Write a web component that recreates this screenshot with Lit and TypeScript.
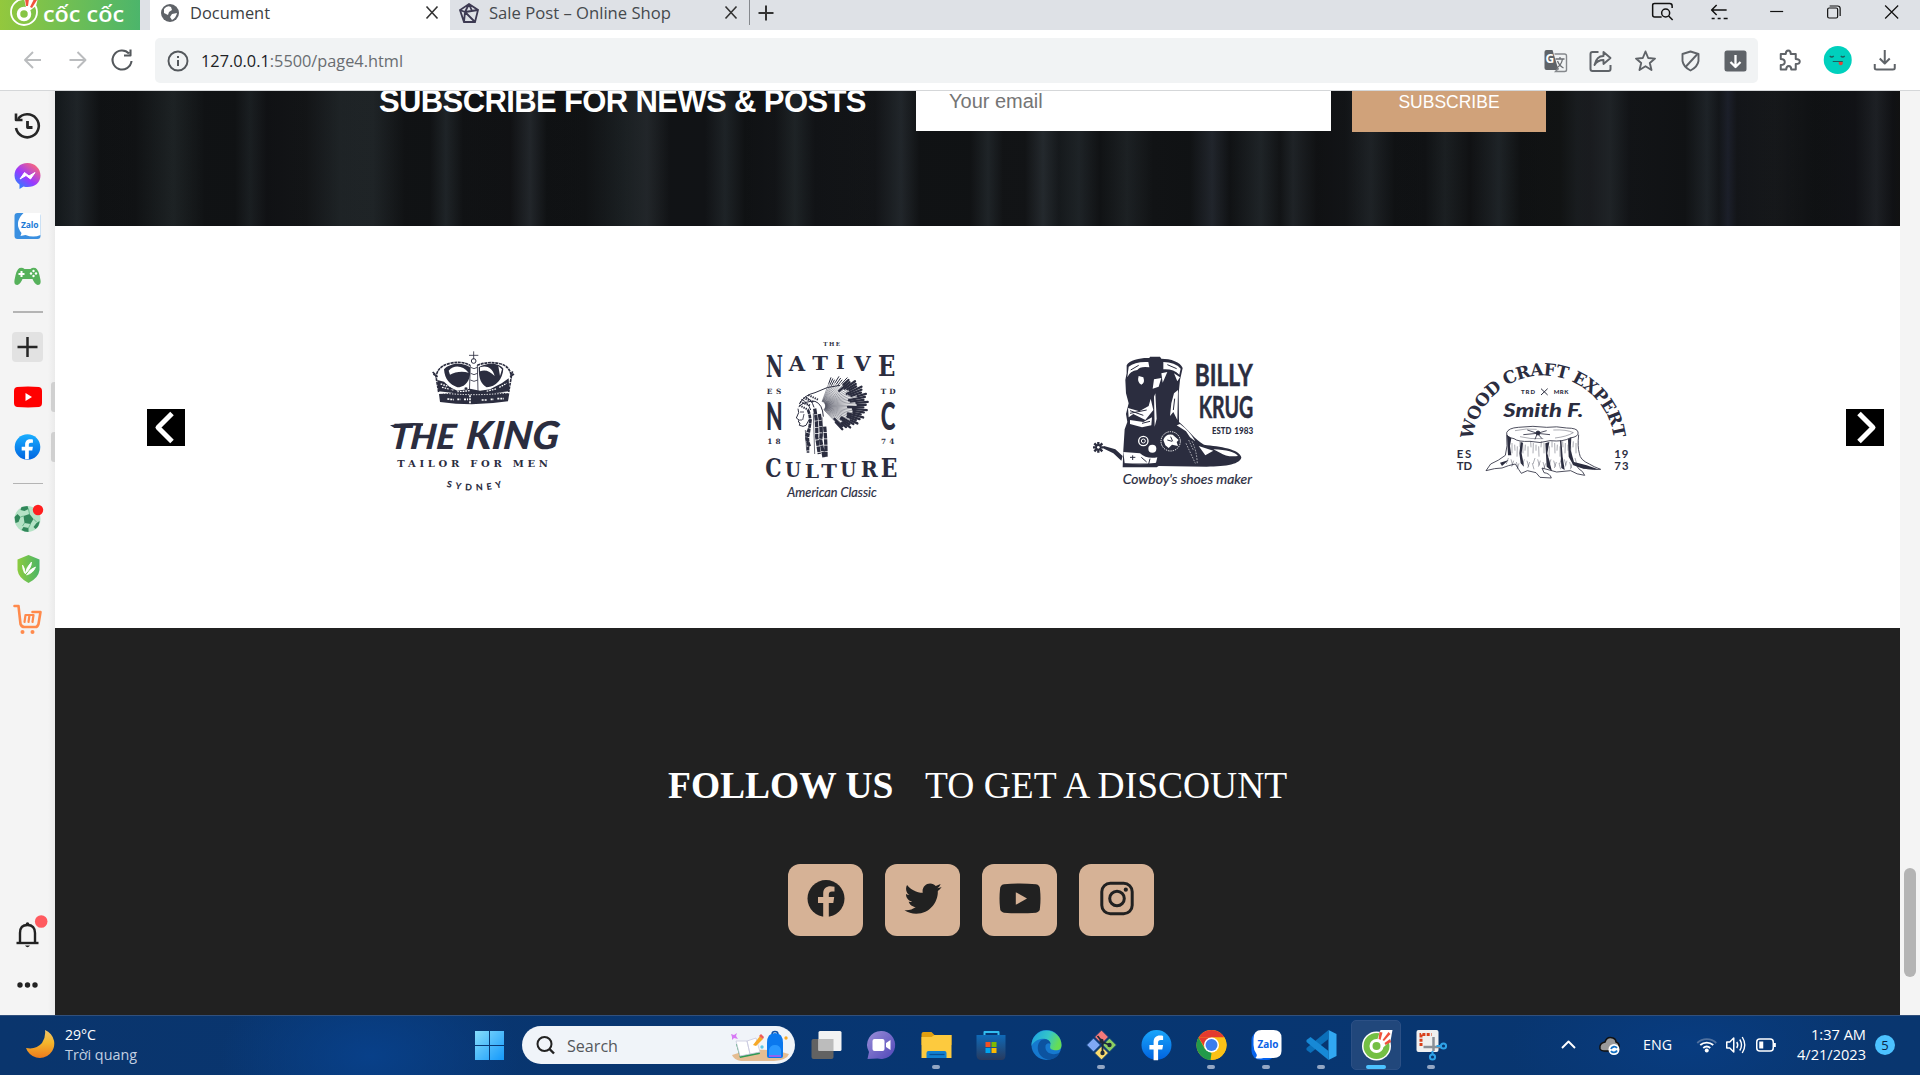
import { LitElement, html, svg, css } from "lit";
import { customElement } from "lit/decorators.js";

const UI = "'Open Sans','Noto Sans',sans-serif";
const INK = "#2b2d3f";

/** Single-line label squeezed to an exact width. */
const fit = (text: unknown, width: number, size: number, color: string, h = 26) => html`
  <svg class="fit" width=${width + 4} height=${h} viewBox="0 0 ${width + 4} ${h}">
    <text x="0" y=${h / 2 + size * 0.36} font-size=${size} fill=${color} textLength=${width} lengthAdjust="spacingAndGlyphs" font-family=${UI}>${text}</text>
  </svg>`;

/** Icon whose origin is the centre of its slot. */
const slot = (w: number, h: number, body: unknown) => html`
  <svg class="slot" width=${w} height=${h} viewBox="${-w / 2} ${-h / 2} ${w} ${h}">${body}</svg>`;

const line = (d: string, c = "#5f6368", w = 2, extra = "none") =>
  svg`<path d=${d} stroke=${c} stroke-width=${w} fill=${extra} stroke-linejoin="round"/>`;

const FB_F = "M1.6 15V4.4h4.2l.8-4.6H1.6v-2.4c0-1.6.7-2.6 2.7-2.6h2.3v-4C6-9.4 4.6-9.6 3.4-9.6c-3.900 0-6.300 2.300-6.300 6.500v2.900h-4.200v4.600h4.200V15z";
const YT_SM = "M-11-10Q0-10.800 11-10Q14-9.600 14-6V6Q14 9.600 11 10Q0 10.800-11 10Q-14 9.600-14 6V-6Q-14-9.600-11-10Z";

const coccoc = (ring: string, body: string) => svg`
  <circle r="14.500" cy="1" fill=${ring}/>
  <circle r="13" cy="1" fill=${body}/>
  <path d="M0-3L4-15H16L14-4L6 3Z" fill=${ring}/>
  <path d="M2-6L3-13L6-12.500L4-5ZM6-5L12-13L14-11L7.500-4ZM8-2L13.500-6L14.500-3L9 0Z" fill="#f0523d"/>
  <circle r="7" cy="1" fill=${ring}/><circle r="4" cy="1" fill=${body}/>`;

const sideTop = [
  svg`${line("M-9.500-7A11.500 11.500 0 1 1-11.500 2", "#262626", 2.600)}${line("M-11.500-12.500V-6H-5", "#262626", 2.600)}${line("M0-5V1.500H5", "#262626", 2.800)}`,
  svg`<defs><linearGradient id="ms" x1="0" y1="1" x2=".8" y2="0"><stop offset="0" stop-color="#0a95ff"/><stop offset=".5" stop-color="#9a38ff"/><stop offset="1" stop-color="#ff6a74"/></linearGradient></defs>
    <path d="M0-13C7.500-13 13-7.500 13-.5S7.500 11 0 11Q-2 11-4 10.500L-8 13V8.500C-11 6.500-13 3.500-13-.5C-13-7.500-7.500-13 0-13Z" fill="url(#ms)"/>
    <path d="M-7.500 3L-3-3.500L1.500 0L7.500-3.500L3 3L-1.500-.5Z" fill="#fff" stroke="#fff" stroke-linejoin="round"/>`,
  svg`<rect x="-13" y="-13" width="26" height="26" rx="3" fill="#3a8fe0"/><path d="M-4-13H13V9Q6 12-2 9L-7 10L-6 7Q-14-3-4-13Z" fill="#fff"/>
    <text x="-6.500" y="2" font-size="8.500" font-weight="700" fill="#1b7ad6" textLength="17.500" font-family=${UI}>Zalo</text>`,
  svg`<path d="M-8-8Q-5-9-3-7H3Q5-9 8-8Q11-7 13 4Q14 9 10 9Q7 8 5 3H-5Q-7 8-10 9Q-14 9-13 4Q-11-7-8-8Z" fill="#56b15b"/>
    <path d="M-6-5V1M-9-2H-3" stroke="#fff" stroke-width="2"/><g fill="#fff"><circle cx="6" cy="-5" r="1.200"/><circle cx="6" cy="0" r="1.200"/><circle cx="3.500" cy="-2.500" r="1.200"/><circle cx="8.500" cy="-2.500" r="1.200"/></g>`,
];
const sideMid = [
  svg`<rect x="-15.500" y="-15" width="31" height="30" rx="4" fill="#e2e2e2"/>${line("M0-10V10M-10 0H10", "#262626", 2.500)}`,
  svg`<path d=${YT_SM} transform="translate(.5,0)" fill="#f00"/><path d="M-2-4L4.500 0L-2 4Z" fill="#fff"/><path d="M27.500-15h-1q-3 0-3 3V12q0 3 3 3h1Z" fill="#d0d0d0"/>`,
  svg`<defs><linearGradient id="fbg" x1="0" y1="0" x2="0" y2="1"><stop offset="0" stop-color="#19aeff"/><stop offset="1" stop-color="#0064e0"/></linearGradient></defs>
    <circle r="12.800" fill="url(#fbg)"/><path d=${FB_F} transform="scale(.82)" fill="#fff"/><path d="M27.500-15h-1q-3 0-3 3V12q0 3 3 3h1Z" fill="#d0d0d0"/>`,
];
const sideLow = [
  svg`<circle r="13" fill="#b4e2c5"/><path d="M-4-3L2-5L6 0L3 5L-3 4ZM-13-2L-10-5L-7-2L-9 3L-12 4ZM-4 8L1 9L1 13Q-3 13-6 11ZM9 4L12 2Q12 7 8 10L6 8ZM-6-12L0-13L1-10L-3-8L-7-9Z" fill="#31875a"/>
    <path d="M2-5L1-10M6 0L9 3M3 5L1 9M-4-3L-7-2M-3 4L-5 7" stroke="#6ab98b" stroke-width="1"/><circle cx="10.500" cy="-9" r="5.200" fill="#ff1f1f"/>`,
  svg`<defs><linearGradient id="sh" x1="0" y1="0" x2="1" y2="0"><stop offset="0" stop-color="#8ccb3e"/><stop offset="1" stop-color="#4bb567"/></linearGradient></defs>
    <path d="M1-14L12-9.500V1Q11 9 1 14Q-9 9-10 1V-9.500Z" fill="url(#sh)"/><path d="M-5-4Q-5 0-3 4Q-2 0-5-4ZM-2.500 5Q-1-2 4-7Q4-1-2.500 5ZM-1 6Q2 0 8-2Q6 4-1 6Z" fill="#fff" stroke="#fff" stroke-width=".8"/>`,
  svg`<g fill="none" stroke="#ff8a4c" stroke-width="2.600" stroke-linecap="round" stroke-linejoin="round"><path d="M-13-13H-9L-7 5Q-6 8-3 8H8Q10 8 11 5L13-7H5"/><path d="M-3 3L-2-4H2L1 3L2-4H6L5 3" stroke-width="2.200"/></g><circle cx="-5" cy="13" r="2" fill="#ff8a4c"/><circle cx="5" cy="13" r="2" fill="#ff8a4c"/>`,
];
const bell = svg`<g transform="translate(0,1)">${line("M-7.500 7V-3Q-7.500-11 0-11T7.500-3V7", "#222", 2.400)}${line("M-11 7H11", "#222", 2.400)}<circle cy="-12" r="1.800" fill="#222"/><path d="M-2.500 9.500H2.500Q0 13-2.500 9.500Z" fill="#222"/></g><circle cx="13.700" cy="-13.500" r="6.300" fill="#ff5a5f"/>`;

const boxIcons = [
  svg`<path d="M-9-11H-3L3 9H-9Q-11 9-11 7V-9Q-11-11-9-11Z" fill="#5f6368"/><path d="M-1-7H9Q11-7 11-5V9Q11 10.500 9 10.500H0L3 7" fill="none" stroke="#85888c" stroke-width="1.400"/>
    <text x="-10" y="2" font-size="12" font-weight="700" fill="#fff" font-family=${UI}>G</text>${line("M0-2H9M4.500-4V-2M7-2Q6 4 1 7M2 0Q4 5 8 7", "#6b6e72", 1.300)}`,
  svg`${line("M-2-9H-8Q-10-9-10-7V8Q-10 10-8 10H8Q10 10 10 8V4", "#5f6368", 2)}${line("M-6 4Q-4-5 3-5V-9L10-3L3 3V-1Q-3-1-6 4Z", "#5f6368", 1.900)}`,
  svg`${line("M0-9.500L2.700-3L9.500-2.400L4.300 2L6 9L0 5.300L-6 9L-4.300 2L-9.500-2.400L-2.700-3Z", "#5f6368", 1.900)}`,
  svg`${line("M0-9.500L8-7V0Q7 6 0 9.500Q-7 6-8 0V-7Z", "#5f6368", 1.900)}${line("M-5 6L7-7", "#5f6368", 1.900)}`,
  svg`<rect x="-11" y="-10.500" width="22" height="21" rx="2.500" fill="#5f6368"/>${line("M0-6V6M-5 1L0 6L5 1", "#fff", 2.300)}`,
];
const barIcons = [
  svg`${line("M-8-6H-4Q-4-9.500-1.500-9.500T1-6H6V-1Q10-1 10 1.500T6 4V9.500H1.500Q1.500 6-1 6T-3.500 9.500H-9V5Q-5 5-5 2T-9-1V-6Z", "#5f6368", 2)}`,
  svg`<circle r="14" fill="#00d0bd"/>${line("M-8-4Q-6-2-4-4M3-4Q5-2 7-4M-5 1.500H5", "#1c5f5c", 1.200)}<path d="M1 2H5V4Q3 6.500 1 4Z" fill="#e0453c"/>`,
  svg`${line("M0-10V3M-5-1.500L0 3.500L5-1.500M-10 4V8Q-10 9.500-8 9.500H8Q10 9.500 10 8V4", "#5f6368", 2)}`,
];
const winIcons = [
  svg`${line("M-1 5H-8Q-10 5-10 3V-7Q-10-8.500-8-8.500H7Q9.500-8.500 9.500-6V-4", "#111", 1.500)}<circle cx="3" cy="1" r="4" fill="none" stroke="#111" stroke-width="1.500"/>${line("M6 4L10 8", "#111", 1.500)}`,
  svg`${line("M7-2H-8M-3-7L-8-2L-3 3", "#111", 1.500)}${line("M-8 6.500H-5M-2 6.500H1M4 6.500H8", "#111", 1.500)}`,
  svg`${line("M-6.500-.5H6.500", "#111", 1.200)}`,
  svg`<rect x="-6" y="-4" width="10" height="10" rx="1.500" fill="none" stroke="#111" stroke-width="1.200"/>${line("M-4-6H4Q6.500-6 6.500-3.500V4", "#111", 1.200)}`,
  svg`${line("M-6.500-6.500L6.500 6.500M6.500-6.500L-6.500 6.500", "#111", 1.200)}`,
];

const apps: { on?: string; art: unknown }[] = [
  { art: svg`<rect x="-15" y="-6" width="22" height="20" rx="2" fill="#626262"/><rect x="-8" y="-14" width="23" height="20" rx="1.500" fill="#f3f3f3"/><rect x="-8" y="-6" width="15" height="12" fill="#bcbcbc"/>` },
  { art: svg`<defs><linearGradient id="ch" x1="0" y1="0" x2="1" y2="1"><stop offset="0" stop-color="#9a8fd8"/><stop offset="1" stop-color="#4f46b8"/></linearGradient></defs><path d="M0-14A14 14 0 1 1-4 13.500L-14 14L-12.500 7A14 14 0 0 1 0-14Z" fill="url(#ch)"/><rect x="-9" y="-6" width="12" height="12" rx="2" fill="#fff"/><path d="M4.500-2L9-5V5L4.500 2Z" fill="#fff"/>` },
  { on: "dot", art: svg`<path d="M-15-11Q-15-13-13-13H-5L-2-10H15V0H-15Z" fill="#e09f10"/><path d="M-15-8H-5L-2-10H15V13H-15Z" fill="#fdca3e"/><path d="M-10 13V8Q-10 6-8 6H8Q10 6 10 8V13Z" fill="#1280d0"/><path d="M-7 9.500H8" stroke="#0a4f94" stroke-width="1.300"/>` },
  { art: svg`<defs><linearGradient id="st" x1="0" y1="0" x2="0" y2="1"><stop offset="0" stop-color="#0f6ab8"/><stop offset="1" stop-color="#283a5e"/></linearGradient></defs>${line("M-7-9V-13H7V-9", "#31bdf0", 2)}<path d="M-15-10H14V10Q14 15 10 15H-10Q-15 15-15 10Z" fill="url(#st)"/><path d="M-6-3H-1V2H-6Z" fill="#f25022"/><path d="M0-3H5V2H0Z" fill="#7fba00"/><path d="M-6 3H-1V8H-6Z" fill="#00a4ef"/><path d="M0 3H5V8H0Z" fill="#ffb900"/>` },
  { art: svg`<defs><linearGradient id="ed" x1="0" y1="0" x2="1" y2=".3"><stop offset="0" stop-color="#1aa0e4"/><stop offset=".6" stop-color="#35c6c8"/><stop offset="1" stop-color="#66dd55"/></linearGradient></defs><circle r="15" fill="#1679cf"/><path d="M-15 1A15 15 0 0 1 15 0C15 5 11 6 7 5C2 4 4 1 4-1C3-6-2-7-6-6C-10-5-14-2-15 1Z" fill="url(#ed)"/><path d="M-5-5C-12 0-9 14 3 14.700C8 14 11 12 13 8C6 11-2 8-1 1C-1-1 2-3 4-1C4-5-1-7-5-5Z" fill="#0c53a0"/>` },
  { on: "dot", art: svg`<g stroke="#0a3a75" stroke-width="1"><path d="M0-15L7-8L0-1L-7-8Z" fill="#f5797a"/><path d="M-8-7L-1 0L-8 7L-15 0Z" fill="#80a9f5"/><path d="M8-7L15 0L8 7L1 0Z" fill="#8ccf62"/><path d="M0 1L7 8L0 15L-7 8Z" fill="#fbdc6e"/></g>${line("M-4-9L1-3V8M1-3L8 0", "#1e2a3a", 1.800)}<circle cx="1" cy="8" r="2.200" fill="#1e2a3a"/><circle cx="8" r="2.200" fill="#1e2a3a"/><circle cx="0" cy="-4" r="2.200" fill="#1e2a3a"/>` },
  { art: svg`<circle r="15" fill="url(#fbg2)"/><defs><linearGradient id="fbg2" x1="0" y1="0" x2="0" y2="1"><stop offset="0" stop-color="#19a6fb"/><stop offset="1" stop-color="#0062df"/></linearGradient></defs><path d=${FB_F} fill="#fff" transform="translate(0,.2)"/>` },
  { on: "dot", art: svg`<circle r="15" fill="#fbc116"/><path d="M-13-7.500A15 15 0 0 1 13-7.500H0Z" fill="#e33b2e"/><path d="M0-7.500H13A15 15 0 0 1 0 15L6.500 4Z" fill="#fbc116"/><path d="M-13-7.500L-6.500 4L0 8L-1 15A15 15 0 0 1-13-7.500Z" fill="#229a4a"/><path d="M-13-7.500L-6 3.500L0-7.500Z" fill="#e33b2e"/><circle r="7.500" fill="#fff"/><circle r="6" fill="#3b7ded"/>` },
  { on: "dot", art: svg`<rect x="-15" y="-14" width="24" height="29" rx="9" fill="#0563f0"/><path d="M-5-15H7Q15-15 15-7V6Q15 13 7 13H-3Q-8 14-11 13Q-9 11-10 9Q-13 5-13 0V-6Q-13-15-5-15Z" fill="#fff"/><text x="-9" y="3" font-size="10.500" font-weight="700" fill="#0b62e6" textLength="21" lengthAdjust="spacingAndGlyphs" font-family=${UI}>Zalo</text>` },
  { on: "dot", art: svg`<path d="M7-15L15-11V11L7 15Z" fill="#31a8f2"/><path d="M7-15V-6L-11 8L-15 5V3Z" fill="#0b6fb9"/><path d="M7 15V6L-11-8L-15-5V-3Z" fill="#1789d6"/>` },
  { on: "active", art: svg`${coccoc("#fff", "#74bf44")}` },
  { on: "dot", art: svg`<rect x="-15" y="-15" width="22" height="22" rx="2" fill="#f0f0f0"/><path d="M-10.500 1V-10.500H0" fill="none" stroke="#d8401c" stroke-width="3" stroke-dasharray="3 1.300"/>${line("M2-8V6M-8 2H10", "#8a8f96", 2.500)}<circle cx="12" cy="1" r="2.600" fill="none" stroke="#2ea3e8" stroke-width="2"/><circle cx="1" cy="12" r="2.600" fill="none" stroke="#2ea3e8" stroke-width="2"/>${line("M9 1H5M1 9V6", "#2ea3e8", 2)}` },
];

const socials = [
  svg`<circle r="18.500" fill="#212121"/><path d="M-2.800 19V4.500H-8V-1.500H-2.800V-5C-2.800-10 .3-12.200 4.500-12.200Q7-12.200 8.500-11.800V-7H6Q2.800-7 2.800-3.800V-1.500H8.200L7.300 4.500H2.800V19Z" fill="#d6b296"/>`,
  svg`<path transform="translate(-18.500,-18.500) scale(.0725)" fill="#212121" d="M459.370 151.716c.325 4.548.325 9.097.325 13.645 0 138.720-105.583 298.558-298.558 298.558-59.452 0-114.680-17.219-161.137-47.106 8.447.974 16.568 1.299 25.340 1.299 49.055 0 94.213-16.568 130.274-44.832-46.132-.975-84.792-31.188-98.112-72.772 6.498.974 12.995 1.624 19.818 1.624 9.421 0 18.843-1.300 27.614-3.573-48.081-9.747-84.143-51.980-84.143-102.985v-1.299c13.969 7.797 30.214 12.670 47.431 13.319-28.264-18.843-46.781-51.005-46.781-87.391 0-19.492 5.197-37.360 14.294-52.954 51.655 63.675 129.300 105.258 216.365 109.807-1.624-7.797-2.599-15.918-2.599-24.040 0-57.828 46.782-104.934 104.934-104.934 30.213 0 57.502 12.670 76.670 33.137 23.715-4.548 46.456-13.320 66.599-25.340-7.798 24.366-24.366 44.833-46.132 57.827 21.117-2.273 41.584-8.122 60.426-16.243-14.292 20.791-32.161 39.308-52.628 54.253z"/>`,
  svg`<path d="M-16-14.200Q0-16 16-14.200Q20-13.500 20-9Q21 0 20 9Q20 13.500 16 14.200Q0 15.500-16 14.200Q-20 13.500-20 9Q-21 0-20-9Q-20-13.500-16-14.200Z" fill="#212121"/><path d="M-4.200-6.300L7 0L-4.200 6.300Z" fill="#d6b296"/>`,
  svg`<g fill="none" stroke="#212121" stroke-width="3"><rect x="-15.200" y="-15.200" width="30.400" height="30.400" rx="8.500"/><circle r="7.300"/></g><circle cx="8.800" cy="-8.800" r="2.100" fill="#212121"/>`,
];

/** Poster lettering: each entry is glyph, left edge, baseline, size and drawn width. */
const word = (glyphs: [string, number, number, number, number][]) =>
  glyphs.map(([c, x, y, s, w]) => svg`<tspan x=${x} y=${y} font-size=${s} textLength=${w} lengthAdjust="spacingAndGlyphs">${c}</tspan>`);

/** Eagle-feather fan: thin quills that end in heavy dark tips. */
const feathers = () => {
  const out = [];
  for (let i = 0; i < 34; i++) {
    const t = i / 33;
    const a = (-72 + t * 122) * Math.PI / 180;
    const r = 74 + 68 * Math.sin(Math.PI * Math.min(1, t * 0.75 + 0.12)) - (i % 3) * 6;
    const cx = 242, cy = 228;
    const ex = cx + Math.cos(a) * r, ey = cy + Math.sin(a) * r * 0.9;
    const k = t < 0.2 ? 0.8 : 0.64 + (i % 4) * 0.06;
    const mx = cx + Math.cos(a) * r * k, my = cy + Math.sin(a) * r * 0.9 * k;
    out.push(svg`<path d="M${cx + Math.cos(a) * 14} ${cy + Math.sin(a) * 14}L${mx} ${my}" stroke-width="1.400"/>
      <path d="M${mx} ${my}L${ex} ${ey}" stroke-width=${t < 0.2 ? 3 : 7} stroke-linecap="round"/>`);
  }
  return out;
};

const king = svg`
  <g fill="none" stroke=${INK} stroke-width="3">
    <path d="M311 64V88M297 76H325" stroke-width="2.500"/><circle cx="311" cy="93" r="7"/>
    <path d="M301 105L298 190M322 105L324 185M302 112Q312 120 322 112M302 130Q312 138 322 130M301 150Q312 158 323 150" stroke-width="2.500"/>
    <path d="M206 186L198 140Q203 108 240 100T300 106M322 106Q350 94 385 100T424 140L416 186" stroke-width="5" stroke-dasharray="9 2"/>
    <path d="M190 132L203 140M188 126l8 8M432 132L420 140M428 124l-4 10" stroke-width="5"/>
  </g>
  <path d="M222 118C240 98 280 96 300 112L300 135C296 160 280 172 262 172C240 164 224 148 222 118ZM326 112C350 96 388 98 400 116C398 148 378 170 350 172C334 162 326 150 326 112Z" fill=${INK}/>
  <path d="M236 122C252 104 278 106 296 128C275 122 255 126 240 134ZM330 112C350 106 366 112 374 138C360 124 346 118 330 124ZM385 108L396 118L390 138Z" fill="#fff"/>
  <path d="M202 150L222 155L240 172L262 182L300 176L330 182L360 178L395 160L416 145L418 184Q312 200 205 184Z" fill=${INK}/>
  <path d="M212 162L232 168M216 172L250 180M262 186L300 182M350 184L380 176M388 172L410 160" stroke="#fff" stroke-width="4" stroke-dasharray="5 3"/>
  <path d="M207 192Q312 178 418 190L414 214Q312 230 210 216Z" fill=${INK}/>
  <path d="M206 188Q312 200 418 188" fill="none" stroke="#fff" stroke-width="3" stroke-dasharray="4 4"/>
  <path d="M232 207L252 209M262 208h10M282 208h12M300 196V222M335 210H352M362 208H372M382 206H402" stroke="#fff" stroke-width="5" stroke-dasharray="6 3"/>
  <circle cx="240" cy="176" r="4" fill=${INK}/><circle cx="288" cy="176" r="5" fill=${INK} stroke="#fff"/>
  <g fill=${INK}>
    <g font-family="Lato, sans-serif" font-weight="900" font-style="italic" transform="translate(60,357) skewX(-6)">
      <text x="-2" y="-1" font-size="104" textLength="196" lengthAdjust="spacingAndGlyphs">THE</text>
      <text x="226" y="0" font-size="116" textLength="278" lengthAdjust="spacingAndGlyphs">KING</text>
    </g>
    <path d="M60 286Q110 276 160 280L158 288Q110 284 70 292Z"/>
    <text x="82" y="412" font-size="30" font-weight="700" font-family="DejaVu Serif, serif" textLength="452">TAILOR FOR MEN</text>
    <path id="syd" d="M229 470Q316 494 410 468" fill="none"/>
    <text font-size="27" font-weight="900" font-family="Lato, sans-serif" letter-spacing="11"><textPath href="#syd" textLength="180">SYDNEY</textPath></text>
  </g>`;

const native = svg`<g fill=${INK} font-weight="700">
  <text x="250" y="47" font-size="17" font-family="DejaVu Serif, serif" textLength="50">THE</text>
  <text font-family="DejaVu Serif, serif">${word([["N", 78, 142, 91, 51], ["A", 146, 124, 62, 49], ["T", 217, 119, 57, 47], ["I", 288, 118, 57, 26], ["V", 342, 123, 62, 50], ["E", 414, 139, 86, 52]])}</text>
  <g font-family="DejaVu Serif, serif" font-size="22"><text x="80" y="192" textLength="44">ES</text><text x="422" y="192" textLength="45">TD</text><text x="82" y="343" textLength="40">18</text><text x="423" y="343" textLength="40">74</text></g>
  <g font-family="Lato, sans-serif" font-weight="900"><text x="78" y="299" font-size="116" textLength="50" lengthAdjust="spacingAndGlyphs">N</text><text x="422" y="299" font-size="116" textLength="44" lengthAdjust="spacingAndGlyphs">C</text></g>
  <text font-family="DejaVu Serif, serif">${word([["C", 76, 442, 76, 49], ["U", 135, 441, 63, 48], ["L", 194, 444, 58, 43], ["T", 244, 444, 58, 47], ["U", 301, 442, 60, 48], ["R", 362, 442, 67, 51], ["E", 422, 441, 79, 50]])}</text>
  <text x="142" y="500" font-size="38" font-style="italic" font-weight="400" font-family="Lato, sans-serif" stroke=${INK} stroke-width=".6" textLength="268" lengthAdjust="spacingAndGlyphs">American Classic</text>
  <g stroke=${INK} fill="none">${feathers()}
    <path d="M178 222Q192 195 225 188Q262 168 300 166M176 230Q196 212 225 214Q248 222 250 260M184 208Q205 218 212 240M195 200Q215 208 222 232" stroke-width="3"/>
    <path d="M178 226L206 240M180 216L210 226M190 204L222 216M205 195L236 210" stroke-width="6" stroke-dasharray="4 3"/>
    <path d="M174 236L176 248L169 264L177 270L175 276L180 279L178 286Q190 292 198 286L208 268" stroke-width="3"/>
    <path d="M180 246H192M178 270H186M192 252L188 270" stroke-width="2.500"/>
    <path d="M204 240Q216 270 206 300Q194 320 204 340L204 368M212 268L206 310Q200 330 210 350" stroke-width="8" stroke-dasharray="12 2"/>
    <path d="M224 236Q232 280 230 320L238 372M238 252Q246 300 242 330L252 382M254 290Q258 330 258 380" stroke-width="10" stroke-dasharray="17 2"/>
    <path d="M196 300L200 362M220 250L224 372M246 262L248 320" stroke-width="2"/>
  </g></g>`;

const boot = svg`
  <path d="M140 76C148 58 190 52 208 54L210 50H240L244 56C272 56 302 66 308 84L300 120L296 160L297 246C322 266 345 300 372 314C420 320 478 326 484 352C482 372 440 380 380 380L236 378L230 382H128L130 330L134 268L142 246L138 222L146 190L138 160L136 120L140 100Z" fill=${INK}/>
  <g fill="#fff">
    <path d="M146 80Q165 64 205 66L208 82Q180 78 172 90Q150 92 142 112ZM250 66Q285 66 302 86L298 104Q280 86 250 88Z"/>
    <path d="M176 108Q170 128 184 134Q196 130 190 112ZM244 100L262 96L248 128ZM282 100L300 112L292 124ZM222 118L244 114L236 140L218 146Z"/>
    <path d="M144 204L178 214L206 198L212 176L220 210L196 240L160 222L146 232ZM282 160L294 150L292 240L280 216L270 228L274 190Z"/>
    <path d="M150 240L190 246L216 232L214 256L186 262L150 252ZM226 160L230 236L224 260L222 170Z"/>
    <path d="M300 252Q330 274 346 304L330 292L318 274L290 256ZM356 318L400 332L376 346ZM400 328Q460 330 474 348Q440 352 420 338Z"/>
    <path d="M130 336L180 340Q200 358 232 352L228 368Q190 376 134 370Z"/>
    <circle cx="217" cy="326" r="12"/>
  </g>
  <g stroke=${INK} fill="none" stroke-width="3"><path d="M152 90L176 76M262 74L290 86M150 352H166M158 346V360M184 352L200 366M210 356L206 372"/><path d="M150 212L190 226M284 176L280 210M134 372H232M150 220L200 210M186 250L210 244"/></g>
  <circle cx="190" cy="303" r="14" fill="none" stroke="#fff" stroke-width="4"/><circle cx="190" cy="303" r="6" fill="none" stroke="#fff" stroke-width="3"/>
  <circle cx="272" cy="304" r="29" fill="none" stroke="#fff" stroke-width="3" stroke-dasharray="4 3"/>
  <path d="M250 300Q256 280 278 284L296 300L290 306L294 318L276 314L266 324L256 316Z" fill="#fff"/><path d="M262 300l14 4M272 290l6 14" stroke=${INK} stroke-width="3"/>
  <path d="M318 310L346 370M326 300L340 330M336 304Q350 330 352 372" stroke="#fff" stroke-width="1.800" fill="none" stroke-dasharray="5 4"/>
  <path d="M128 348L106 328L72 318V326L100 340L124 362Z" fill=${INK}/>
  <path d="M55 306V338M39 322H72M43 310L67 334M67 310L43 334" stroke=${INK} stroke-width="7"/><circle cx="55" cy="322" r="4" fill="#fff"/>
  <g fill=${INK} font-family="Lato, sans-serif" font-weight="700">
    <text x="344" y="137" font-size="91" textLength="174" lengthAdjust="spacingAndGlyphs" stroke=${INK} stroke-width="1.500">BILLY</text>
    <text x="356" y="233" font-size="91" textLength="164" lengthAdjust="spacingAndGlyphs" stroke=${INK} stroke-width="1.500">KRUG</text>
    <g font-size="28" font-weight="900"><text x="396" y="282" textLength="58" lengthAdjust="spacingAndGlyphs">ESTD</text><text x="463" y="282" textLength="57" lengthAdjust="spacingAndGlyphs">1983</text></g>
    <text x="128" y="431" font-size="43" font-weight="400" stroke=${INK} stroke-width=".6" font-style="italic" textLength="388" lengthAdjust="spacingAndGlyphs">Cowboy's shoes maker</text>
  </g>`;

const wood = svg`<g fill=${INK}>
  <path id="bow" d="M98 299A213 213 0 0 1 522 299" fill="none"/>
  <text font-size="51" font-weight="700" font-family="DejaVu Serif, serif"><textPath href="#bow" textLength="624">WOOD CRAFT EXPERT</textPath></text>
  <g font-family="Lato, sans-serif" font-weight="900">
    <g font-size="18"><text x="243" y="162" textLength="42">TRD</text><text x="341" y="162" textLength="44">MRK</text></g>
    <g font-size="34" font-weight="700"><text x="50" y="354" textLength="44">ES</text><text x="50" y="389" textLength="46">TD</text><text x="523" y="354" textLength="42">19</text><text x="523" y="389" textLength="43">73</text></g>
    <text x="190" y="232" font-size="54" font-style="italic" textLength="240" lengthAdjust="spacingAndGlyphs">Smith F.</text>
  </g>
  <path d="M303 146L323 165M323 146L303 165" stroke=${INK} stroke-width="3"/>
  <g fill="none" stroke=${INK} stroke-width="2.500" stroke-linejoin="round">
    <path d="M200 278Q205 264 235 262Q280 256 320 262Q350 258 380 264Q412 264 414 276Q418 290 390 294Q370 306 330 302Q300 312 270 304Q235 306 222 296Q198 292 200 278Z"/>
    <path d="M292 280L262 270M292 280L320 272M292 280L285 298M292 280L306 296M292 280L330 284M292 280L250 284" stroke-width="2.500"/><circle cx="294" cy="279" r="6" fill=${INK}/>
    <path d="M225 272Q260 264 290 268M240 290Q270 298 310 296M340 270Q380 268 400 278Q380 290 345 294" stroke-width="1.200"/>
    <path d="M200 284Q204 320 196 346Q176 362 152 372L138 392Q165 384 186 384Q205 376 226 372Q238 392 244 400L262 392L288 398L300 412L334 414Q330 400 312 398L306 384L350 396L392 392Q410 404 434 406Q430 394 416 386L408 374Q440 392 482 388Q460 380 448 372Q420 360 418 340Q412 320 416 284"/>
  </g>
  <path d="M201 286L214 294L210 318L214 346L204 346ZM384 298L394 292L392 330L402 366L440 376L474 388L430 386L400 376L386 350ZM316 310L328 306L322 340L336 394L320 380ZM360 302L364 300L368 350L374 390L364 384ZM242 306L249 308L245 340L252 380L242 370L238 340ZM180 368L206 360L186 378Z" fill=${INK}/>
  <g stroke=${INK} stroke-width="1.200">${Array.from({ length: 26 }, (_, i) => {
    const x = 208 + i * 8;
    return svg`<path d="M${x} ${304 + (i % 4) * 5}l${(i % 3) - 1} ${18 + (i * 13) % 26}M${x - 3} ${354 + (i % 5) * 4}l${i % 2 ? 5 : -6} 18"/>`;
  })}</g>
</g>`;

@customElement("app-root")
export class AppRoot extends LitElement {
  static styles = css`
    :host { display: flex; flex-direction: column; width: 1920px; height: 1075px; overflow: hidden; background: #fff; font-family: 'Open Sans', 'Noto Sans', sans-serif; }
    svg { display: block; flex: none; }
    .fit { overflow: visible; }
    .tabs { display: flex; height: 30px; background: #dee1e6; flex: none; }
    .brand { width: 140px; height: 30px; }
    .tab { display: flex; align-items: center; padding-bottom: 4px; box-sizing: border-box; height: 30px; }
    .tab.active { width: 300px; background: #fff; margin-left: 10px; }
    .tab .fit { margin-left: 6px; }
    .tab .x { margin: 0 7px 0 auto; }
    .tab.idle { width: 299px; }
    .sep { width: 1px; height: 25px; background: #85888d; }
    .wins { display: flex; margin-left: auto; height: 24px; }
    .bar { display: flex; align-items: center; height: 60px; border-bottom: 1px solid #d5d7d9; flex: none; }
    .nav { display: flex; padding-left: 11px; width: 144px; box-sizing: content-box; }
    .omni { display: flex; align-items: center; width: 1603px; height: 45px; margin-top: 1px; border-radius: 5px; background: #f1f3f4; box-sizing: border-box; }
    .omni .fit { margin-right: auto; }
    .ext { display: flex; padding-left: 8px; }
    .main { display: flex; height: 924px; flex: none; }
    .side { display: flex; flex-direction: column; width: 55px; background: linear-gradient(90deg, #f4f4f4 48px, #ebebeb); padding: 10px 0 5px; box-sizing: border-box; }
    .rule { width: 30px; height: 1.5px; background: #b4b4b4; margin: 10px auto 9px; flex: none; }
    .rule.low { margin: 11px auto 10px; }
    .push { flex: 1; }
    .page { width: 1845px; display: flex; flex-direction: column; }
    .hero { height: 135px; overflow: hidden; background: linear-gradient(rgba(17, 19, 21, .24), rgba(17, 19, 21, .24)), linear-gradient(90deg, #14191c 0, #23292d 22px, #0f1113 45px, #101214 80px, #212729 118px, #101214 150px, #101214 180px, #1d2225 195px, #101114 212px, #131517 250px, #22282b 285px, #23292c 318px, #101214 350px, #101214 375px, #23292d 391px, #101214 408px, #101113 455px, #272c31 475px, #0f1113 492px, #101214 530px, #1e2427 570px, #272c30 592px, #111316 615px, #111316 650px, #22282c 670px, #0f1113 690px, #121417 720px, #22282b 740px, #111316 760px, #131518 820px, #262c31 846px, #101214 865px, #101214 915px, #23292d 933px, #121416 948px, #121416 970px, #2a3035 988px, #171b1e 1004px, #22282c 1024px, #101214 1045px, #202528 1072px, #111315 1098px, #101214 1135px, #262b33 1157px, #101214 1175px, #23292d 1206px, #121416 1225px, #23282c 1238px, #101113 1262px, #121417 1290px, #22272b 1316px, #0f1113 1340px, #101214 1370px, #1e2326 1390px, #101113 1415px, #22282c 1444px, #0f1112 1466px, #111313 1505px, #1b1f22 1522px, #1c1e22 1535px, #23282c 1555px, #121417 1575px, #101214 1630px, #22282d 1652px, #14171b 1664px, #1f2330 1673px, #14161a 1682px, #17191c 1720px, #0f1113 1760px, #111216 1800px, #212429 1821px, #101114 1838px, #111 1845px); }
    .form { display: flex; align-items: flex-start; height: 61px; margin-top: -20px; font-family: 'Liberation Sans', Arial, sans-serif; }
    .form h2 { margin: 0 0 0 324px; width: 537px; font-size: 31px; letter-spacing: -0.62px; font-weight: 700; color: #fff; white-space: nowrap; line-height: 61px; }
    .email { width: 415px; height: 60px; background: #fff; color: #757575; font-size: 20px; line-height: 61px; padding-left: 33px; box-sizing: border-box; }
    .send { width: 194px; height: 61px; margin-left: 21px; background: #d0a27a; color: #fff; text-align: center; font-size: 17.5px; line-height: 63px; }
    .brands { display: flex; align-items: center; height: 402px; background: #fff; padding-left: 92px; box-sizing: border-box; flex: none; }
    .arrow { width: 38px; height: 37px; background: #000; }
    .l1 { margin-left: 185px; } .l2 { margin-left: 150px; } .l3 { margin-left: 160px; } .l4 { margin-left: 170px; }
    .arrow.next { margin-left: 206px; }
    .foot { flex: 1; background: #212121; display: flex; flex-direction: column; }
    .follow { display: flex; margin: 133px 0 0 613px; width: 640px; height: 50px; font: 400 37.5px/50px 'Liberation Serif', 'Times New Roman', serif; color: #fff; white-space: nowrap; }
    .follow b { width: 257px; }
    .socials { display: flex; gap: 22px; margin: 53px 0 0 733px; }
    .soc { width: 75px; height: 72px; border-radius: 12px; background: #d6b296; display: flex; padding-left: 1px; box-sizing: border-box; }
    .scroll { width: 20px; background: #f4f4f4; display: flex; flex-direction: column; align-items: center; }
    .thumb { width: 12px; height: 109px; border-radius: 6px; margin-top: 777px; background: #b4b4b4; }
    .task { display: flex; align-items: center; height: 60px; flex: none; box-sizing: border-box; border-top: 1px solid #31507c; padding-bottom: 1px; background: radial-gradient(ellipse 150px 90px at 370px 40px, #084089, transparent), radial-gradient(ellipse 180px 90px at 1690px 30px, #083c80, transparent), linear-gradient(90deg, #0a356d, #073672 50%, #09366f); }
    .weather { display: flex; width: 475px; }
    .lines { display: flex; flex-direction: column; margin-left: 9px; padding-top: 2px; }
    .search { display: flex; align-items: center; width: 273px; height: 38px; border-radius: 19px; background: #f0f4f9; margin: 0 3.5px 0 18px; }
    .search .fit { margin: 2px auto 0 0; }
    .apps { display: flex; }
    .app { position: relative; width: 55px; height: 60px; }
    .app.active::before { content: ""; position: absolute; left: 2px; top: 5px; width: 50px; height: 50px; border-radius: 5px; background: #21477b; border: 1px solid #2c5085; box-sizing: border-box; }
    .app svg { position: relative; }
    .mark { position: absolute; left: 23.5px; bottom: 6px; width: 8px; height: 4px; border-radius: 2px; background: #93a6c3; }
    .active .mark { left: 17.5px; width: 20px; background: #4cc2ff; }
    .tray { display: flex; align-items: center; margin-left: auto; }
    .lang { margin: 0 16px 0 10px; }
    .clock { display: flex; flex-direction: column; align-items: flex-end; width: 90px; }
    .badge { width: 20px; height: 20px; border-radius: 50%; background: #4cc2ff; color: #0b2545; font-size: 13px; line-height: 20px; text-align: center; margin: 0 25px 0 5px; }
  `;

  private cross() {
    return html`<span class="x">${slot(22, 22, line("M-5.500-6.500L5.500 5.500M5.500-6.500L-5.500 5.500", "#333", 1.6))}</span>`;
  }

  private app(a: { on?: string; art: unknown }) {
    return html`<div class="app ${a.on ?? ""}">${slot(55, 60, a.art)}${a.on ? html`<div class="mark"></div>` : ""}</div>`;
  }

  render() {
    return html`
      <div class="tabs">
        <svg class="brand" viewBox="0 0 140 30">
          <defs><linearGradient id="bg"><stop offset="0" stop-color="#93c83d"/><stop offset="1" stop-color="#4cb56b"/></linearGradient></defs>
          <rect width="140" height="30" fill="url(#bg)"/>
          <circle cx="24" cy="12" r="13" fill="none" stroke="#fff" stroke-width="1.800"/>
          <path d="M26 8L24-2H38L36 6L28 12Z" fill="#fff"/>
          <path d="M26 6L25-1L29-1L28 6ZM30 7L34-1L37 0L32 8Z" fill="#f0523d"/>
          <circle cx="24" cy="14" r="5.500" fill="none" stroke="#fff" stroke-width="3.500"/>
          <text x="43" y="22" font-size="21" font-weight="600" fill="#fff" textLength="81" lengthAdjust="spacingAndGlyphs" font-family="'Open Sans','Noto Sans',sans-serif">cốc cốc</text>
        </svg>
        <div class="tab active">
          <svg width="34" height="26" viewBox="0 0 34 26"><circle cx="20" cy="13" r="9" fill="#5f6368"/><path d="M14 9Q17 5 21 7L22 10L19 12L18 15L14 13ZM22 14L27 13Q26 18 22 20L20 17Z" fill="#fff"/></svg>
          ${fit("Document", 80, 17, "#3c4043")}
          ${this.cross()}
        </div>
        <div class="tab idle">
          <svg width="33" height="26" viewBox="0 0 33 26"><path d="M19 4L28 10L25 22H14L10 10ZM19 4L15 12L14 22M15 12L25 22M15 12L28 10M10 10L15 12M19 4L22 11" fill="none" stroke="#3d3a52" stroke-width="1.800"/></svg>
          ${fit("Sale Post – Online Shop", 182, 17, "#45494d")}
          ${this.cross()}
        </div>
        <div class="sep"></div>
        ${slot(32, 26, line("M0-7.500V7.500M-7.500 0H7.500", "#333", 2))}
        <div class="wins">${winIcons.map((i) => slot(57.3, 24, i))}</div>
      </div>
      <div class="bar">
        <div class="nav">
          ${slot(44, 44, line("M8 0H-7.500M0-8L-8 0L0 8", "#babcbe", 1.9))}
          ${slot(45, 44, line("M-8 0H7.500M0-8L8 0L0 8", "#babcbe", 1.9))}
          ${slot(44, 44, line("M7-6.500A9.500 9.500 0 1 0 9.500 1M8.500-10.500V-4.500H2", "#54585c", 2.1))}
        </div>
        <div class="omni">
          ${slot(46, 44, svg`<circle r="9.500" fill="none" stroke="#54585c" stroke-width="1.900"/><path d="M0-1V5M0-5V-3" stroke="#54585c" stroke-width="2"/>`)}
          ${fit(svg`<tspan fill="#202124">127.0.0.1</tspan><tspan>:5500/page4.html</tspan>`, 202, 17, "#696d71")}
          ${boxIcons.map((i) => slot(45, 44, i))}
        </div>
        <div class="ext">${barIcons.map((i) => slot(47.5, 44, i))}</div>
      </div>
      <div class="main">
        <div class="side">
          ${sideTop.map((i) => slot(55, 50, i))}
          <div class="rule"></div>
          ${sideMid.map((i) => slot(55, 50, i))}
          <div class="rule low"></div>
          ${sideLow.map((i) => slot(55, 50, i))}
          <div class="push"></div>
          ${slot(55, 50, bell)}
          ${slot(55, 50, svg`<g fill="#222"><circle cx="-7.500" r="2.700"/><circle r="2.700"/><circle cx="7.500" r="2.700"/></g>`)}
        </div>
        <div class="page">
          <div class="hero"><div class="form">
            <h2>SUBSCRIBE FOR NEWS &amp; POSTS</h2>
            <div class="email">Your email</div>
            <div class="send">SUBSCRIBE</div>
          </div></div>
          <div class="brands">
            <div class="arrow">${slot(38, 37, line("M6-14L-8 0L6 14", "#fff", 5))}</div>
            <svg class="l1" width="220" height="194" viewBox="0 0 660 582">${king}</svg>
            <svg class="l2" width="180" height="194" viewBox="0 0 540 582">${native}</svg>
            <svg class="l3" width="190" height="194" viewBox="0 -30 570 582">${boot}</svg>
            <svg class="l4" width="200" height="194" viewBox="0 -30 600 582">${wood}</svg>
            <div class="arrow next">${slot(38, 37, line("M-6-14L8 0L-6 14", "#fff", 5))}</div>
          </div>
          <div class="foot">
            <div class="follow"><b>FOLLOW US</b><span>TO GET A DISCOUNT</span></div>
            <div class="socials">${socials.map((s) => html`<div class="soc">${slot(74, 69, s)}</div>`)}</div>
          </div>
        </div>
        <div class="scroll"><div class="thumb"></div></div>
      </div>
      <div class="task">
        <div class="weather">
          <svg width="56" height="44" viewBox="0 0 56 44"><defs><linearGradient id="mn" x1="0" y1="0" x2="0" y2="1"><stop offset="0" stop-color="#f0c46a"/><stop offset=".45" stop-color="#f4b62c"/><stop offset="1" stop-color="#ee7a1c"/></linearGradient></defs><path d="M45 7A14.500 14.500 0 1 1 26 25Q36 27 42 20Q46 14 45 7Z" fill="url(#mn)"/></svg>
          <div class="lines">${fit("29°C", 31, 14.5, "#fff", 20)}${fit("Trời quang", 72, 14.5, "#c3d0e2", 20)}</div>
        </div>
        <svg width="29" height="29" viewBox="0 0 29 29"><defs><linearGradient id="wn" x1="0" y1="0" x2="1" y2="1"><stop offset="0" stop-color="#86dcfb"/><stop offset="1" stop-color="#1499fb"/></linearGradient></defs><path d="M0 0H14V14H0ZM15 0H29V14H15ZM0 15H14V29H0ZM15 15H29V29H15Z" fill="url(#wn)"/></svg>
        <div class="search">
          ${slot(45, 38, svg`<circle cx="0" cy="-1" r="7" fill="none" stroke="#222" stroke-width="2"/>${line("M5 4L9.500 8.500", "#222", 2.4)}`)}
          ${fit("Search", 51, 16.5, "#55585c")}
          <svg width="66" height="38" viewBox="0 0 66 38"><path d="M3 29Q30 19 60 28Q58 34 45 35H12Q5 34 3 29Z" fill="#e5bd92"/><path d="M7 18L27 14L31 28L11 32Z" fill="#2f9a55"/><path d="M7 15L18 15L21 28L11 30ZM18 15L27 12L31 26L21 28Z" fill="#fff" stroke="#c9c9de" stroke-width=".8"/><path d="M24 19L31 10L34 13L27 20Z" fill="#f7a928"/><path d="M30 10L32 8L35 11L34 13Z" fill="#ef5b5b"/><path d="M2 8L5 9L8 7L7 10L9 13L5 12L3 14L3 11Z" fill="#d77af5"/><circle cx="33" cy="21" r="1.700" fill="#5ac8e8"/><circle cx="57" cy="12" r="1.700" fill="#f7a928"/><path d="M38 17Q38 7 46 7T54 17V30Q54 32 52 32H40Q38 32 38 30Z" fill="#0a78ee"/><path d="M40 24Q41 19 46 19T52 24V29H40Z" fill="#2a98ff"/><path d="M43 8Q43 5.500 46 5.500T49 8" fill="none" stroke="#0a50a8" stroke-width="1.300"/><path d="M40 30H52" stroke="#c05cf0" stroke-width="1.500"/></svg>
        </div>
        <div class="apps">${apps.map((a) => this.app(a))}</div>
        <div class="tray">
          ${slot(37, 40, line("M-6.500 3L0-3.500L6.500 3", "#fff", 1.9))}
          ${slot(46, 40, svg`<path d="M-10 4Q-11-2-5-3Q-3-9 3-7Q6-6 6-3Q10-2 9 4Q8 6 0 6H-6Q-9 6-10 4Z" fill="#9a9a9a" stroke="#111" stroke-width="1.500"/><circle cx="4" cy="4.500" r="5.500" fill="#fff"/><path d="M1 4A3.500 3.500 0 0 1 7 3M7 5.500A3.500 3.500 0 0 1 1 6" fill="none" stroke="#1672c4" stroke-width="1.800"/>`)}
          <div class="lang">${fit("ENG", 29, 14.5, "#fff", 24)}</div>
          ${slot(29.5, 40, svg`<path d="M-9.500-2A13.500 13.500 0 0 1 9.500-2" fill="none" stroke="#50719f" stroke-width="1.800"/>${line("M-6.500 0A10 10 0 0 1 6.500 0M-3.500 3A5.500 5.500 0 0 1 3.500 3", "#fff", 1.9)}<circle cy="5.500" r="2" fill="#fff"/>`)}
          ${slot(29.5, 40, svg`${line("M-9-3H-6L-2-7V7L-6 3H-9Z", "#fff", 1.5)}${line("M1-3Q3 0 1 3M4-5.500Q7.500 0 4 5.500M6.500-8Q11.500 0 6.500 8", "#fff", 1.4)}`)}
          ${slot(29.5, 40, svg`<rect x="-9" y="-6" width="16.500" height="12" rx="3" fill="none" stroke="#fff" stroke-width="1.500"/><rect x="-6.500" y="-3.500" width="4" height="7" fill="#fff"/><path d="M9-2V2" stroke="#fff" stroke-width="2.200"/>`)}
          <div class="clock">${fit("1:37 AM", 55, 14.5, "#fff", 20)}${fit("4/21/2023", 69, 14.5, "#fff", 20)}</div>
          <div class="badge">5</div>
        </div>
      </div>`;
  }
}
